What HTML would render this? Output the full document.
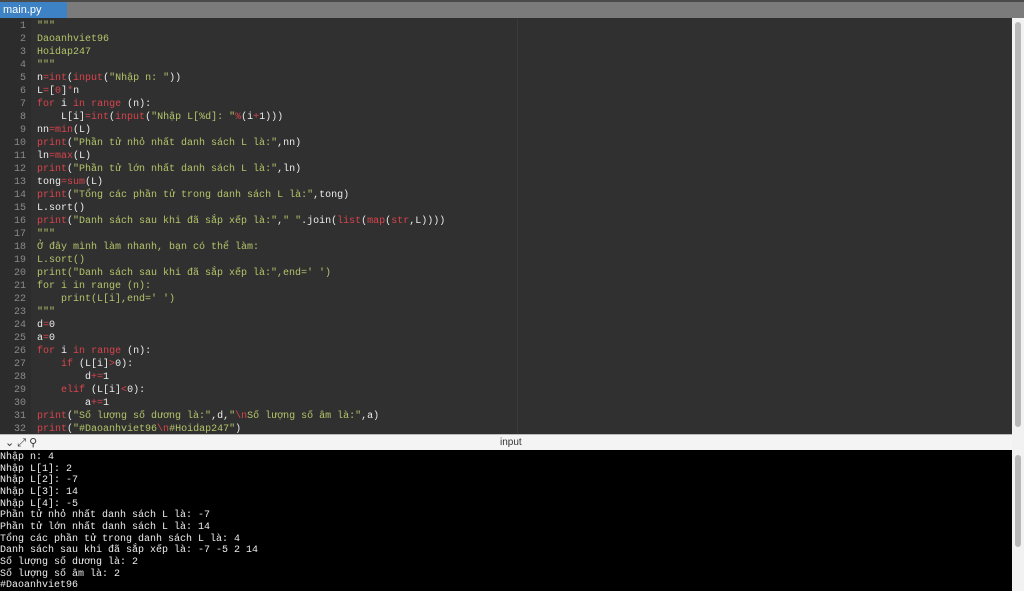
<!DOCTYPE html>
<html><head><meta charset="utf-8"><style>
*{margin:0;padding:0;box-sizing:border-box}
body{width:1024px;height:591px;overflow:hidden;background:#fff;font-family:"Liberation Mono",monospace;position:relative}
#top{position:absolute;left:0;top:0;width:1024px;height:18px;background:#7b7b7b;border-top:2px solid #4a4a4a}
#tab{position:absolute;left:0;top:2px;width:67px;height:16px;background:#3d82c4;color:#fff;font:11px "Liberation Sans",sans-serif;padding:2px 0 0 3px}
#ed{position:absolute;left:0;top:18px;width:1012px;height:416px;background:#303030;overflow:hidden}
#gut{position:absolute;left:0;top:0;width:31px;height:416px;background:#2c2c2c}
#margin{position:absolute;left:517px;top:0;width:1px;height:416px;background:#3a3a3a}
.ln{position:absolute;left:0;width:26px;text-align:right;color:#8a8a8a;font-size:10px;line-height:13px}
.cd{position:absolute;left:37px;color:#ececec;font-size:10px;line-height:13px;white-space:pre}
.k{color:#d8444c}.s{color:#b3c46a}
#sb{position:absolute;left:1012px;top:18px;width:12px;height:573px;background:#f2f2f2}
#th1{position:absolute;left:1015px;top:22px;width:6px;height:405px;background:#b8b8b8;border-radius:3px}
#th2{position:absolute;left:1015px;top:455px;width:6px;height:92px;background:#b8b8b8;border-radius:3px}
#bar{position:absolute;left:0;top:434px;width:1012px;height:16px;background:#f4f4f4;border-top:1px solid #bbb;font:10px "Liberation Sans",sans-serif;color:#333}
#con{position:absolute;left:0;top:450px;width:1012px;height:141px;background:#000;color:#ececec;font-size:10px;line-height:11.65px;white-space:pre;padding-top:2px}
</style></head><body>
<div id="top"></div><div id="tab">main.py</div>
<div id="ed"><div id="gut"></div><div id="margin"></div>
<div style="position:absolute;left:0;top:2px">
<div class="ln" style="top:0">1</div><div class="ln" style="top:13px">2</div><div class="ln" style="top:26px">3</div><div class="ln" style="top:39px">4</div><div class="ln" style="top:52px">5</div><div class="ln" style="top:65px">6</div><div class="ln" style="top:78px">7</div><div class="ln" style="top:91px">8</div><div class="ln" style="top:104px">9</div><div class="ln" style="top:117px">10</div><div class="ln" style="top:130px">11</div><div class="ln" style="top:143px">12</div><div class="ln" style="top:156px">13</div><div class="ln" style="top:169px">14</div><div class="ln" style="top:182px">15</div><div class="ln" style="top:195px">16</div><div class="ln" style="top:208px">17</div><div class="ln" style="top:221px">18</div><div class="ln" style="top:234px">19</div><div class="ln" style="top:247px">20</div><div class="ln" style="top:260px">21</div><div class="ln" style="top:273px">22</div><div class="ln" style="top:286px">23</div><div class="ln" style="top:299px">24</div><div class="ln" style="top:312px">25</div><div class="ln" style="top:325px">26</div><div class="ln" style="top:338px">27</div><div class="ln" style="top:351px">28</div><div class="ln" style="top:364px">29</div><div class="ln" style="top:377px">30</div><div class="ln" style="top:390px">31</div><div class="ln" style="top:403px">32</div>
<div class="cd" style="top:0"><span class="s">"""
Daoanhviet96
Hoidap247
"""</span>
n<span class="k">=int</span>(<span class="k">input</span>(<span class="s">"Nhập n: "</span>))
L<span class="k">=</span>[<span class="k">0</span>]<span class="k">*</span>n
<span class="k">for</span> i <span class="k">in</span> <span class="k">range</span> (n):
    L[i]<span class="k">=int</span>(<span class="k">input</span>(<span class="s">"Nhập L[%d]: "</span><span class="k">%</span>(i<span class="k">+</span>1)))
nn<span class="k">=min</span>(L)
<span class="k">print</span>(<span class="s">"Phần tử nhỏ nhất danh sách L là:"</span>,nn)
ln<span class="k">=max</span>(L)
<span class="k">print</span>(<span class="s">"Phần tử lớn nhất danh sách L là:"</span>,ln)
tong<span class="k">=sum</span>(L)
<span class="k">print</span>(<span class="s">"Tổng các phần tử trong danh sách L là:"</span>,tong)
L.sort()
<span class="k">print</span>(<span class="s">"Danh sách sau khi đã sắp xếp là:"</span>,<span class="s">" "</span>.join(<span class="k">list</span>(<span class="k">map</span>(<span class="k">str</span>,L))))
<span class="s">"""
Ở đây mình làm nhanh, bạn có thể làm:
L.sort()
print("Danh sách sau khi đã sắp xếp là:",end=' ')
for i in range (n):
    print(L[i],end=' ')
"""</span>
d<span class="k">=</span>0
a<span class="k">=</span>0
<span class="k">for</span> i <span class="k">in</span> <span class="k">range</span> (n):
    <span class="k">if</span> (L[i]<span class="k">&gt;</span>0):
        d<span class="k">+=</span>1
    <span class="k">elif</span> (L[i]<span class="k">&lt;</span>0):
        a<span class="k">+=</span>1
<span class="k">print</span>(<span class="s">"Số lượng số dương là:"</span>,d,<span class="s">"<span class="k">\n</span>Số lượng số âm là:"</span>,a)
<span class="k">print</span>(<span class="s">"#Daoanhviet96<span class="k">\n</span>#Hoidap247"</span>)</div>
</div></div>
<div id="bar"><span style="position:absolute;left:5px;top:1px;font-size:11px">⌄ ⤢ ⚲</span><span style="position:absolute;left:500px;top:2px">input</span></div>
<div id="con">Nhập n: 4
Nhập L[1]: 2
Nhập L[2]: -7
Nhập L[3]: 14
Nhập L[4]: -5
Phần tử nhỏ nhất danh sách L là: -7
Phần tử lớn nhất danh sách L là: 14
Tổng các phần tử trong danh sách L là: 4
Danh sách sau khi đã sắp xếp là: -7 -5 2 14
Số lượng số dương là: 2
Số lượng số âm là: 2
#Daoanhviet96</div>
<div id="sb"></div><div id="th1"></div><div id="th2"></div>
</body></html>
